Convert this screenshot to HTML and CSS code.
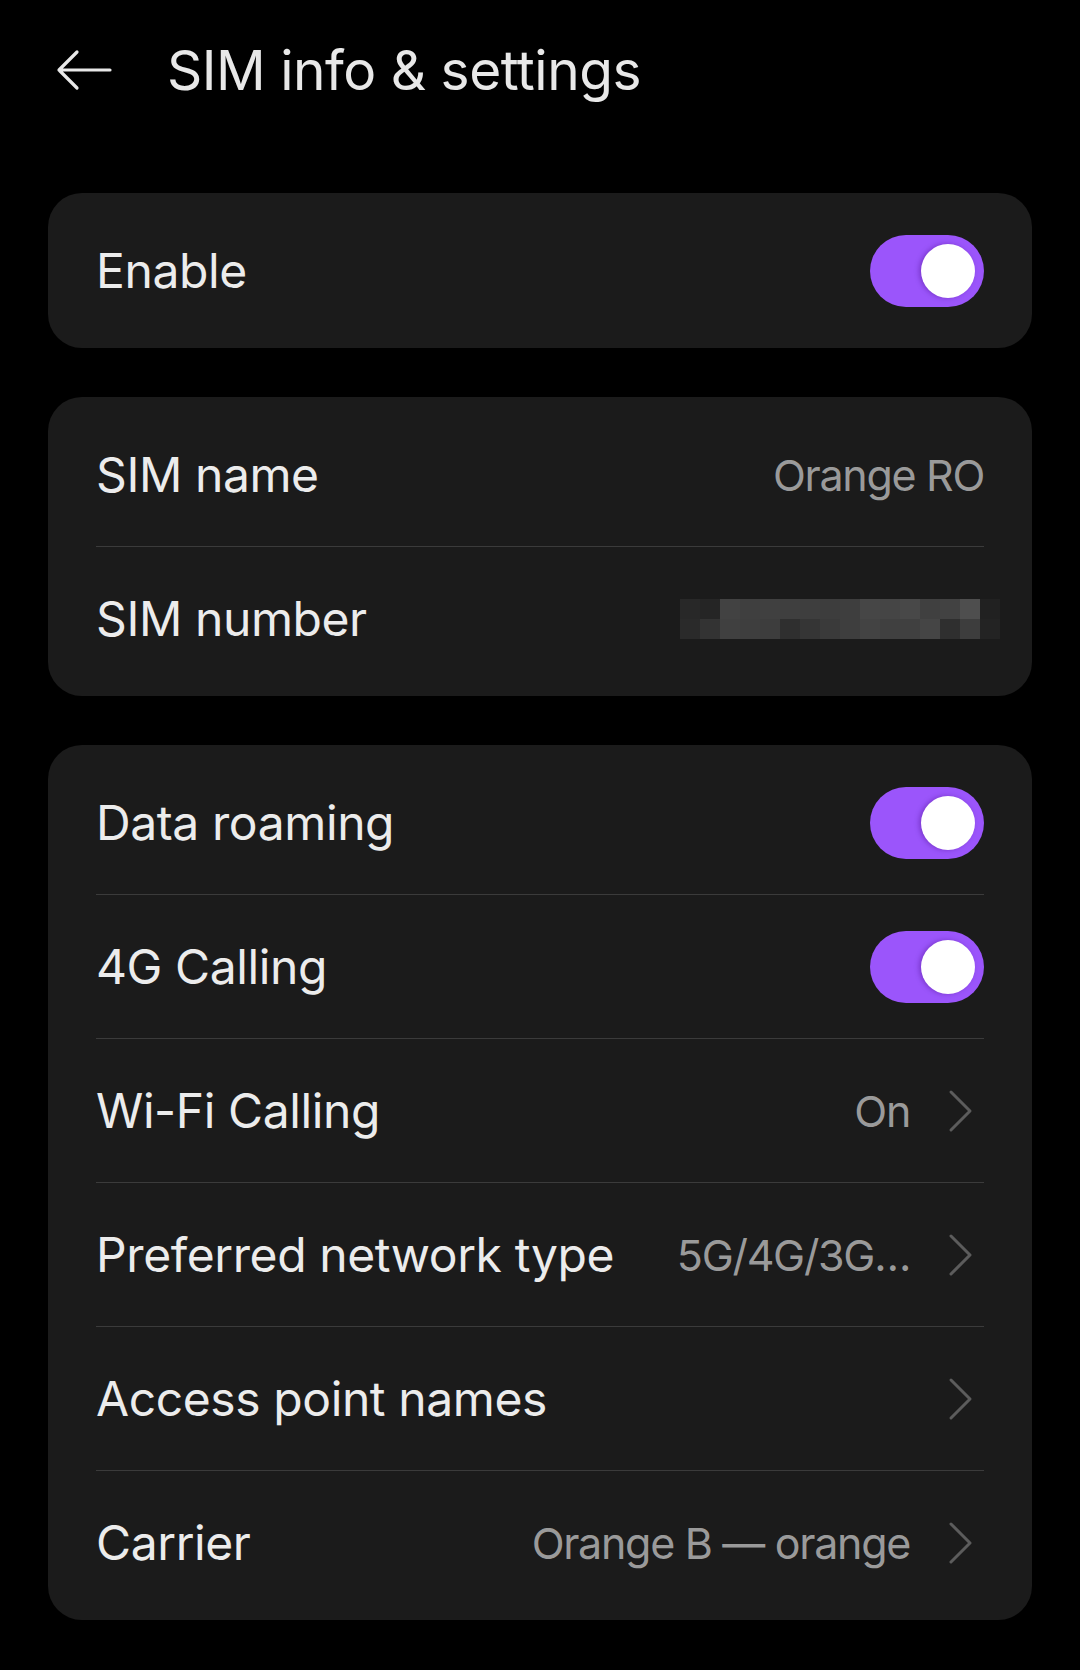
FILE: index.html
```html
<!DOCTYPE html>
<html>
<head>
  <title>SIM info &amp; settings</title>
  <link rel="stylesheet" href="styles.css">
</head>
<body>
  <div class="header">
    <svg class="back" width="56" height="42" viewBox="0 0 56 42">
      <path d="M21 3 L3 21 L21 39 M3 21 H54" fill="none" stroke="#e8e8e8" stroke-width="3.2" stroke-linecap="round" stroke-linejoin="round"/>
    </svg>
    <h1 class="title">SIM info &amp; settings</h1>
  </div>

  <div class="cards">
    <div class="card">
      <div class="row">
        <span class="label">Enable</span>
        <span class="switch on"><span class="knob"></span></span>
      </div>
    </div>

    <div class="card">
      <div class="row">
        <span class="label">SIM name</span>
        <span class="value">Orange RO</span>
      </div>
      <div class="row">
        <span class="label">SIM number</span>
        <span class="blur">
          <i style="background:#282828"></i><i style="background:#252525"></i><i style="background:#424242"></i><i style="background:#3f3f3f"></i><i style="background:#404040"></i><i style="background:#3f3f3f"></i><i style="background:#3e3e3e"></i><i style="background:#3d3d3d"></i><i style="background:#3e3e3e"></i><i style="background:#464646"></i><i style="background:#454545"></i><i style="background:#484848"></i><i style="background:#404040"></i><i style="background:#424242"></i><i style="background:#4e4e4e"></i><i style="background:#212121"></i>
          <i style="background:#2a2a2a"></i><i style="background:#333333"></i><i style="background:#404040"></i><i style="background:#3e3e3e"></i><i style="background:#3d3d3d"></i><i style="background:#2f2f2f"></i><i style="background:#353535"></i><i style="background:#3a3a3a"></i><i style="background:#3e3e3e"></i><i style="background:#434343"></i><i style="background:#404040"></i><i style="background:#404040"></i><i style="background:#454545"></i><i style="background:#2f2f2f"></i><i style="background:#3d3d3d"></i><i style="background:#232323"></i>
        </span>
      </div>
    </div>

    <div class="card">
      <div class="row">
        <span class="label">Data roaming</span>
        <span class="switch on"><span class="knob"></span></span>
      </div>
      <div class="row">
        <span class="label">4G Calling</span>
        <span class="switch on"><span class="knob"></span></span>
      </div>
      <div class="row">
        <span class="label">Wi-Fi Calling</span>
        <span class="end">
          <span class="value">On</span>
          <svg class="chev" width="48" height="44" viewBox="0 0 48 44"><path d="M15 3 L34 22 L15 41" fill="none" stroke="#5c5c5c" stroke-width="3" stroke-linecap="round" stroke-linejoin="round"/></svg>
        </span>
      </div>
      <div class="row">
        <span class="label">Preferred network type</span>
        <span class="end">
          <span class="value">5G/4G/3G…</span>
          <svg class="chev" width="48" height="44" viewBox="0 0 48 44"><path d="M15 3 L34 22 L15 41" fill="none" stroke="#5c5c5c" stroke-width="3" stroke-linecap="round" stroke-linejoin="round"/></svg>
        </span>
      </div>
      <div class="row">
        <span class="label">Access point names</span>
        <span class="end">
          <svg class="chev" width="48" height="44" viewBox="0 0 48 44"><path d="M15 3 L34 22 L15 41" fill="none" stroke="#5c5c5c" stroke-width="3" stroke-linecap="round" stroke-linejoin="round"/></svg>
        </span>
      </div>
      <div class="row">
        <span class="label">Carrier</span>
        <span class="end">
          <span class="value">Orange B — orange</span>
          <svg class="chev" width="48" height="44" viewBox="0 0 48 44"><path d="M15 3 L34 22 L15 41" fill="none" stroke="#5c5c5c" stroke-width="3" stroke-linecap="round" stroke-linejoin="round"/></svg>
        </span>
      </div>
    </div>
  </div>
</body>
</html>
```

FILE: styles.css
```css
body {
  margin: 0;
  background: #000;
  font-family: Inter, "Noto Sans", sans-serif;
  color: #ececec;
}
.header {
  height: 140px;
  display: flex;
  align-items: center;
  padding-left: 56px;
  margin-bottom: 53px;
}
.back {
  display: block;
}
.title {
  margin: 0 0 0 55px;
  font-size: 55px;
  font-weight: 400;
  color: #e8e8e8;
  letter-spacing: -0.5px;
}
.cards {
  padding: 0 48px;
}
.card {
  background: #1b1b1b;
  border-radius: 34px;
  padding: 6px 48px;
  margin-bottom: 49px;
}
.row {
  height: 143px;
  display: flex;
  align-items: center;
  justify-content: space-between;
}
.row + .row {
  border-top: 1px solid #3b3b3b;
}
.label {
  font-size: 48px;
  color: #ececec;
  letter-spacing: -0.4px;
}
.value {
  font-size: 43px;
  color: #9a9a9a;
  letter-spacing: -1.3px;
}
.end {
  display: flex;
  align-items: center;
  gap: 26px;
}
.chev {
  display: block;
}
.switch {
  width: 114px;
  height: 72px;
  border-radius: 36px;
  background: #3a3a3a;
  position: relative;
}
.switch.on {
  background: #9b55fb;
}
.knob {
  position: absolute;
  top: 9px;
  right: 9px;
  width: 54px;
  height: 54px;
  border-radius: 50%;
  background: #fff;
  box-shadow: -2px 0 5px rgba(60, 0, 120, 0.35);
}
.blur {
  display: grid;
  grid-template-columns: repeat(16, 20px);
  grid-auto-rows: 20px;
  margin-right: -16px;
}
.blur i {
  display: block;
}
```
